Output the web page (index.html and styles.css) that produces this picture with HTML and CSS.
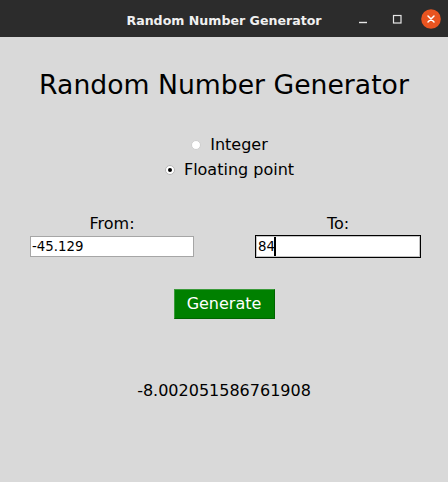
FILE: index.html
```html
<!DOCTYPE html>
<html lang="en">
<head>
<meta charset="utf-8">
<title>Random Number Generator</title>
<link rel="stylesheet" href="styles.css">
</head>
<body>
<div class="window">
  <header class="titlebar">
    <div class="spacer"></div>
    <div class="title">Random Number Generator</div>
    <div class="controls">
      <span class="ctl">
        <svg width="34" height="37" viewBox="0 0 34 37"><line x1="13" y1="22.5" x2="21" y2="22.5" stroke="#e6e6e6" stroke-width="1.4"/></svg>
      </span>
      <span class="ctl">
        <svg width="34" height="37" viewBox="0 0 34 37"><rect x="13.5" y="15.5" width="7.5" height="7.5" fill="none" stroke="#e6e6e6" stroke-width="1.2"/></svg>
      </span>
      <span class="ctl">
        <svg width="34" height="37" viewBox="0 0 34 37"><circle cx="17" cy="19" r="9.8" fill="#e95420"/><path d="M14 16 L20 22 M20 16 L14 22" stroke="#ffffff" stroke-width="1.5" stroke-linecap="round"/></svg>
      </span>
    </div>
  </header>
  <main class="app">
    <h1 class="heading">Random Number Generator</h1>
    <div class="radios">
      <label class="radio"><span class="dot"></span><span>Integer</span></label>
      <label class="radio"><span class="dot checked"></span><span>Floating point</span></label>
    </div>
    <div class="range">
      <div class="field">
        <div class="label">From:</div>
        <div class="entry" role="textbox"><span>-45.129</span></div>
      </div>
      <div class="field">
        <div class="label">To:</div>
        <div class="entry focused" role="textbox"><span>84</span><span class="caret"></span></div>
      </div>
    </div>
    <button class="generate" type="button">Generate</button>
    <div class="result">-8.002051586761908</div>
  </main>
</div>
</body>
</html>
```
FILE: styles.css
```css
html, body {
  margin: 0;
  padding: 0;
}
body {
  width: 448px;
  height: 482px;
  background: #d9d9d9;
  font-family: "DejaVu Sans", sans-serif;
  color: #000;
  overflow: hidden;
}
.window {
  width: 448px;
  height: 482px;
  background: #d9d9d9;
}
.titlebar {
  height: 37px;
  background: #2c2c2c;
  display: grid;
  grid-template-columns: 1fr auto 1fr;
}
.title {
  font-family: "DejaVu Sans", sans-serif;
  font-weight: bold;
  font-size: 12.6px;
  color: #f0f0f0;
  line-height: 33px;
  padding-top: 4px;
  white-space: nowrap;
}
.controls {
  display: flex;
  justify-content: flex-end;
}
.ctl {
  width: 34px;
  height: 37px;
  display: block;
}
.ctl svg {
  display: block;
}
.app {
  display: flex;
  flex-direction: column;
}
.heading {
  margin: 32px 0 0;
  font-size: 26.67px;
  font-weight: normal;
  line-height: 32px;
  text-align: center;
}
.radios {
  margin-top: 31px;
  display: flex;
  flex-direction: column;
}
.radio {
  height: 25px;
  display: flex;
  align-items: center;
  justify-content: center;
  gap: 9px;
  padding-left: 11px;
  font-size: 16px;
  line-height: 25px;
}
.dot {
  width: 10px;
  height: 10px;
  box-sizing: border-box;
  border-radius: 50%;
  background: #ffffff;
  border: 1px solid #cfcfcf;
  display: flex;
  align-items: center;
  justify-content: center;
}
.dot.checked {
  border-color: #b8b8b8;
}
.dot.checked::after {
  content: "";
  width: 4px;
  height: 4px;
  border-radius: 50%;
  background: #000;
}
.range {
  margin-top: 32px;
  display: grid;
  grid-template-columns: 166px 166px;
  column-gap: 60px;
  padding-left: 29px;
}
.field {
  display: flex;
  flex-direction: column;
  align-items: center;
}
.label {
  font-size: 16px;
  line-height: 20px;
}
.entry {
  margin-top: 1px;
  width: 166px;
  height: 23px;
  box-sizing: border-box;
  border: 1px solid #d9d9d9;
  box-shadow: inset 0 0 0 1px #a6a6a6;
  background: #ffffff;
  display: flex;
  align-items: center;
  padding-left: 2px;
  font-size: 13.33px;
  line-height: 16px;
}
.entry.focused {
  border-color: #000;
  box-shadow: inset 0 0 0 1px #c4c4c4;
}
.caret {
  width: 2px;
  height: 19px;
  background: #000;
  margin-left: -1px;
}
.generate {
  margin: 31px auto 0;
  width: 101px;
  height: 30px;
  box-sizing: border-box;
  background: #008000;
  color: #ffffff;
  border: 1px solid;
  border-color: #3a9a3a #006400 #006400 #3a9a3a;
  font-family: "DejaVu Sans", sans-serif;
  font-size: 16px;
  line-height: 28px;
  padding: 0;
}
.result {
  margin-top: 62px;
  font-size: 16px;
  line-height: 20px;
  text-align: center;
}
```
